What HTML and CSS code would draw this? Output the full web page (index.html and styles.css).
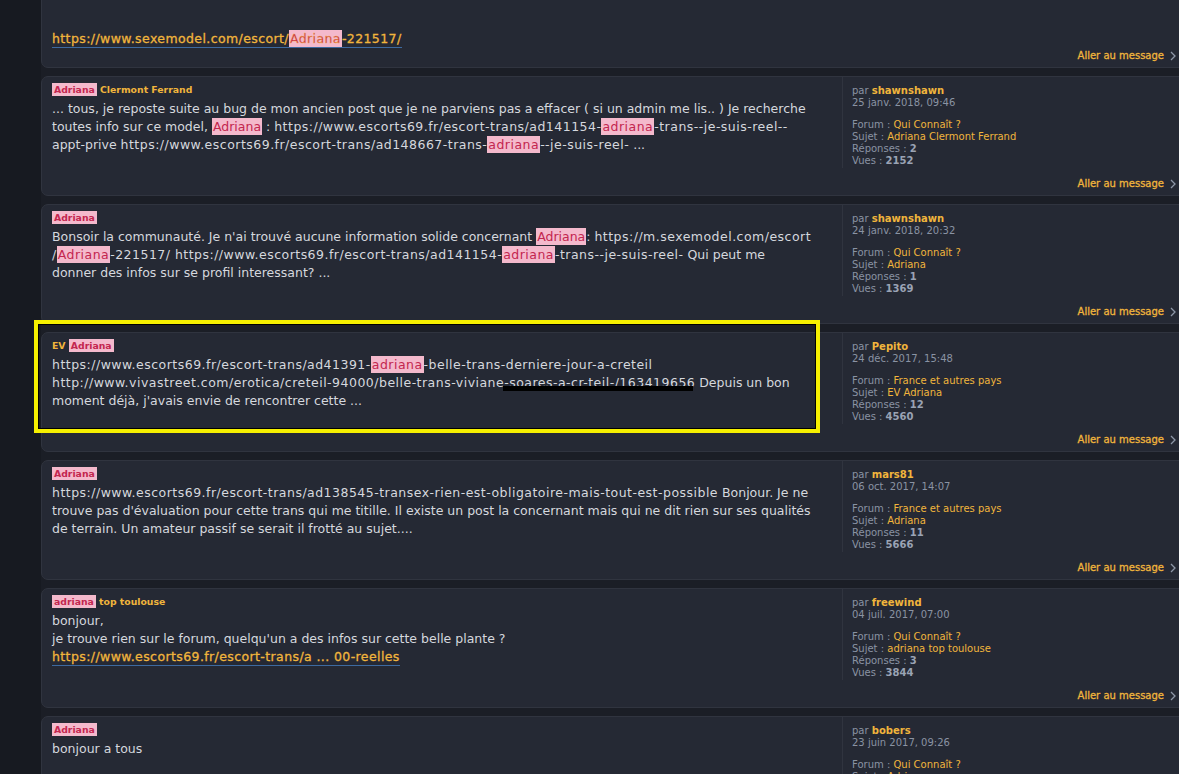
FILE: index.html
```html
<!DOCTYPE html>
<html lang="fr">
<head>
    <meta charset="UTF-8">
    <link rel="stylesheet" href="styles.css">
</head>
<body>

<div class="results">

    <!-- Résultat coupé en haut -->
    <div class="post first">
        <div class="post-inner">
            <div class="postbody">
                <h3 class="post-title"><a href="#"><span class="hl">Adriana</span> sexemodel</a></h3>
                <div class="content">
                    Salut à tous, quelqu'un connaît cette belle trans ? Elle a l'air top sur les photos<br>
                    mais je n'ai trouvé aucun avis sur le forum. Merci d'avance pour vos retours<br>
                    et vos infos, même les mauvaises expériences m'intéressent.<br>
                    Voici le lien vers son annonce :<br>
                    -<br><br><br>
                    <a class="postlink" href="#">https://www.sexemodel.com/escort/<span class="hl">Adriana</span>-221517/</a>
                </div>
            </div>
            <dl class="postprofile">
                <dt>par <a class="username" href="#">shawnshawn</a></dt>
                <dd class="date">26 janv. 2018, 10:12</dd>
                <dd class="gap">Forum : <a href="#">Qui Connaît ?</a></dd>
                <dd>Sujet : <a href="#">Adriana</a></dd>
                <dd>Réponses : <strong>4</strong></dd>
                <dd>Vues : <strong>1987</strong></dd>
            </dl>
        </div>
        <div class="jump"><a href="#">Aller au message</a><svg class="chevron" viewBox="0 0 6 10"><polyline points="1 1 5 5 1 9"/></svg></div>
    </div>

    <div class="post">
        <div class="post-inner">
            <div class="postbody">
                <h3 class="post-title"><a href="#"><span class="hl">Adriana</span> Clermont Ferrand</a></h3>
                <div class="content">
                    ... tous, je reposte suite au bug de mon ancien post que je ne parviens pas a effacer ( si un admin me lis.. ) Je recherche<br>
                    toutes info sur ce model, <span class="hl">Adriana</span> : <span class="url">https://www.escorts69.fr/escort-trans/ad141154-<span class="hl">adriana</span>-trans--je-suis-reel--</span><br>
                    appt-prive <span class="url">https://www.escorts69.fr/escort-trans/ad148667-trans-<span class="hl">adriana</span>--je-suis-reel-</span> ...
                </div>
            </div>
            <dl class="postprofile">
                <dt>par <a class="username" href="#">shawnshawn</a></dt>
                <dd class="date">25 janv. 2018, 09:46</dd>
                <dd class="gap">Forum : <a href="#">Qui Connaît ?</a></dd>
                <dd>Sujet : <a href="#">Adriana Clermont Ferrand</a></dd>
                <dd>Réponses : <strong>2</strong></dd>
                <dd>Vues : <strong>2152</strong></dd>
            </dl>
        </div>
        <div class="jump"><a href="#">Aller au message</a><svg class="chevron" viewBox="0 0 6 10"><polyline points="1 1 5 5 1 9"/></svg></div>
    </div>

    <div class="post">
        <div class="post-inner">
            <div class="postbody">
                <h3 class="post-title"><a href="#"><span class="hl">Adriana</span></a></h3>
                <div class="content">
                    Bonsoir la communauté. Je n'ai trouvé aucune information solide concernant <span class="hl">Adriana</span>: <span class="url">https://m.sexemodel.com/escort</span><br>
                    <span class="url">/<span class="hl">Adriana</span>-221517/ https://www.escorts69.fr/escort-trans/ad141154-<span class="hl">adriana</span>-trans--je-suis-reel-</span> Qui peut me<br>
                    donner des infos sur se profil interessant? ...
                </div>
            </div>
            <dl class="postprofile">
                <dt>par <a class="username" href="#">shawnshawn</a></dt>
                <dd class="date">24 janv. 2018, 20:32</dd>
                <dd class="gap">Forum : <a href="#">Qui Connaît ?</a></dd>
                <dd>Sujet : <a href="#">Adriana</a></dd>
                <dd>Réponses : <strong>1</strong></dd>
                <dd>Vues : <strong>1369</strong></dd>
            </dl>
        </div>
        <div class="jump"><a href="#">Aller au message</a><svg class="chevron" viewBox="0 0 6 10"><polyline points="1 1 5 5 1 9"/></svg></div>
    </div>

    <div class="post">
        <div class="post-inner">
            <div class="postbody">
                <h3 class="post-title"><a href="#">EV <span class="hl">Adriana</span></a></h3>
                <div class="content">
                    <span class="url">https://www.escorts69.fr/escort-trans/ad41391-<span class="hl">adriana</span>-belle-trans-derniere-jour-a-creteil</span><br>
                    <span class="url">http://www.vivastreet.com/erotica/creteil-94000/belle-trans-viviane<span class="redact">-soares-a-cr-teil-/163419656</span></span> Depuis un bon<br>
                    moment déjà, j'avais envie de rencontrer cette ...
                </div>
            </div>
            <dl class="postprofile">
                <dt>par <a class="username" href="#">Pepito</a></dt>
                <dd class="date">24 déc. 2017, 15:48</dd>
                <dd class="gap">Forum : <a href="#">France et autres pays</a></dd>
                <dd>Sujet : <a href="#">EV Adriana</a></dd>
                <dd>Réponses : <strong>12</strong></dd>
                <dd>Vues : <strong>4560</strong></dd>
            </dl>
        </div>
        <div class="jump"><a href="#">Aller au message</a><svg class="chevron" viewBox="0 0 6 10"><polyline points="1 1 5 5 1 9"/></svg></div>
        <!-- cadre d'annotation -->
        <div class="marker"></div>
    </div>

    <div class="post">
        <div class="post-inner">
            <div class="postbody">
                <h3 class="post-title"><a href="#"><span class="hl">Adriana</span></a></h3>
                <div class="content">
                    <span class="url">https://www.escorts69.fr/escort-trans/ad138545-transex-rien-est-obligatoire-mais-tout-est-possible</span> Bonjour. Je ne<br>
                    trouve pas d'évaluation pour cette trans qui me titille. Il existe un post la concernant mais qui ne dit rien sur ses qualités<br>
                    de terrain. Un amateur passif se serait il frotté au sujet....
                </div>
            </div>
            <dl class="postprofile">
                <dt>par <a class="username" href="#">mars81</a></dt>
                <dd class="date">06 oct. 2017, 14:07</dd>
                <dd class="gap">Forum : <a href="#">France et autres pays</a></dd>
                <dd>Sujet : <a href="#">Adriana</a></dd>
                <dd>Réponses : <strong>11</strong></dd>
                <dd>Vues : <strong>5666</strong></dd>
            </dl>
        </div>
        <div class="jump"><a href="#">Aller au message</a><svg class="chevron" viewBox="0 0 6 10"><polyline points="1 1 5 5 1 9"/></svg></div>
    </div>

    <div class="post">
        <div class="post-inner">
            <div class="postbody">
                <h3 class="post-title"><a href="#"><span class="hl">adriana</span> top toulouse</a></h3>
                <div class="content">
                    bonjour,<br>
                    je trouve rien sur le forum, quelqu'un a des infos sur cette belle plante ?<br>
                    <a class="postlink" href="#">https://www.escorts69.fr/escort-trans/a ... 00-reelles</a>
                </div>
            </div>
            <dl class="postprofile">
                <dt>par <a class="username" href="#">freewind</a></dt>
                <dd class="date">04 juil. 2017, 07:00</dd>
                <dd class="gap">Forum : <a href="#">Qui Connaît ?</a></dd>
                <dd>Sujet : <a href="#">adriana top toulouse</a></dd>
                <dd>Réponses : <strong>3</strong></dd>
                <dd>Vues : <strong>3844</strong></dd>
            </dl>
        </div>
        <div class="jump"><a href="#">Aller au message</a><svg class="chevron" viewBox="0 0 6 10"><polyline points="1 1 5 5 1 9"/></svg></div>
    </div>

    <div class="post">
        <div class="post-inner">
            <div class="postbody">
                <h3 class="post-title"><a href="#"><span class="hl">Adriana</span></a></h3>
                <div class="content">
                    bonjour a tous
                </div>
            </div>
            <dl class="postprofile">
                <dt>par <a class="username" href="#">bobers</a></dt>
                <dd class="date">23 juin 2017, 09:26</dd>
                <dd class="gap">Forum : <a href="#">Qui Connaît ?</a></dd>
                <dd>Sujet : <a href="#">Adriana</a></dd>
                <dd>Réponses : <strong>2</strong></dd>
                <dd>Vues : <strong>1024</strong></dd>
            </dl>
        </div>
        <div class="jump"><a href="#">Aller au message</a><svg class="chevron" viewBox="0 0 6 10"><polyline points="1 1 5 5 1 9"/></svg></div>
    </div>

</div>

</body>
</html>
```

FILE: styles.css
```css
/* Page */
html, body {
    margin: 0;
    padding: 0;
    overflow: hidden;
}

body {
    background-color: #171a21;
    font-family: "DejaVu Sans", Verdana, sans-serif;
    color: #d5d8de;
}

a {
    text-decoration: none;
    color: #f1b53c;
}

/* Liste des résultats */
.results {
    margin-left: 41px;
    width: 1150px;
    background-color: #1b1e26;
}

.post {
    position: relative;
    background-color: #252934;
    border: 1px solid #30343f;
    border-radius: 7px;
    margin-bottom: 8px;
    padding: 0 14px 5px 10px;
}

.post.first {
    margin-top: -120px;
}

.post.first .jump {
    margin-top: 2px;
}

.post-inner {
    display: flex;
    align-items: flex-start;
}

/* Colonne du message */
.postbody {
    width: 770px;
    flex-shrink: 0;
    padding-top: 6px;
}

.post-title {
    margin: 0 0 3px;
    font-size: 9.3px;
    line-height: 14px;
    font-weight: bold;
}

.content {
    font-size: 12.5px;
    line-height: 18px;
}

.url {
    letter-spacing: 0.48px;
}

.hl {
    background-color: #f4b9cc;
    color: #c3264f;
    padding: 1px 1px;
}

.post-title .hl {
    padding: 1px 2px;
}

.postlink {
    border-bottom: 1px solid #3d6aa0;
    padding-bottom: 1px;
    letter-spacing: 0.4px;
    -webkit-text-stroke: 0.3px #f1b53c;
}

.redact {
    position: relative;
}

.redact::after {
    content: "";
    position: absolute;
    left: -1px;
    right: 2px;
    bottom: -1px;
    height: 5px;
    background-color: #000;
}

/* Colonne du profil */
.postprofile {
    margin: 0 0 0 20px;
    padding: 8px 0 1px 9px;
    border-left: 1px solid #30343f;
    font-size: 10px;
    line-height: 12px;
    color: #8a93a3;
}

.postprofile dd {
    margin: 0;
}

.postprofile .gap {
    margin-top: 10px;
}

.postprofile strong {
    color: #9aa3b4;
}

.username {
    font-weight: bold;
}

/* Lien "Aller au message" */
.jump {
    margin-top: 10px;
    display: flex;
    justify-content: flex-end;
    align-items: center;
    gap: 6px;
    font-size: 10px;
    line-height: 12px;
}

.jump a {
    -webkit-text-stroke: 0.3px #f1b53c;
}

.chevron {
    width: 6px;
    height: 10px;
    fill: none;
    stroke: #8d96a7;
    stroke-width: 1.3;
}

/* Cadre jaune d'annotation */
.marker {
    position: absolute;
    left: -8px;
    top: -13px;
    width: 778px;
    height: 105px;
    border: 4px solid #f6f000;
    box-shadow: inset 0 0 0 1px #000;
    pointer-events: none;
}
```
